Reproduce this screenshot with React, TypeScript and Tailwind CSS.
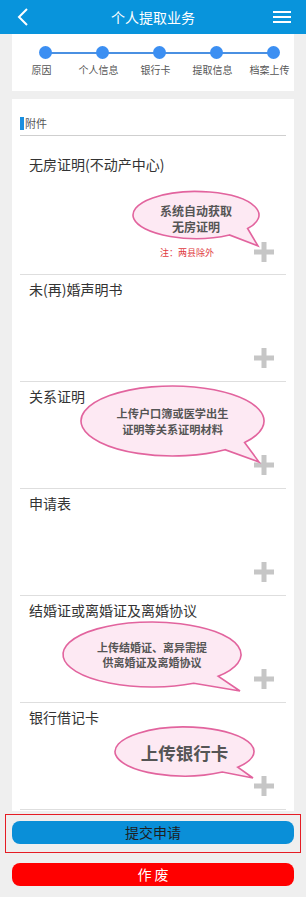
import React from "react";

const FONT = { fontFamily: '"Noto Sans CJK SC", "Noto Sans", sans-serif' };

function bubblePath(cx: number, cy: number, rx: number, ry: number, aDeg: number, bDeg: number, tx: number, ty: number) {
  const a = (aDeg * Math.PI) / 180;
  const b = (bDeg * Math.PI) / 180;
  const ax = cx + rx * Math.cos(a);
  const ay = cy + ry * Math.sin(a);
  const bx = cx + rx * Math.cos(b);
  const by = cy + ry * Math.sin(b);
  return `M${ax} ${ay} A${rx} ${ry} 0 1 0 ${bx} ${by} L${tx} ${ty} Z`;
}

const bubbles = [
  { cx: 196, cy: 215, rx: 63, ry: 23.5, a: 35, b: 58, tx: 258, ty: 246 },
  { cx: 172.5, cy: 421, rx: 91.5, ry: 35, a: 38, b: 55, tx: 259, ty: 462 },
  { cx: 152, cy: 654.5, rx: 89, ry: 32.5, a: 42, b: 62, tx: 240, ty: 691 },
  { cx: 184.5, cy: 751.5, rx: 69.5, ry: 24.5, a: 40, b: 57, tx: 253, ty: 778 },
];

function Plus() {
  return (
    <svg width="20" height="20" viewBox="0 0 20 20">
      <path d="M10 0.5V19.5M0.5 10H19.5" stroke="#c6c6c6" strokeWidth="5" strokeLinecap="round" />
    </svg>
  );
}

const steps = ["原因", "个人信息", "银行卡", "提取信息", "档案上传"];
const items = ["未(再)婚声明书", "关系证明", "申请表", "结婚证或离婚证及离婚协议", "银行借记卡"];

export default function App() {
  return (
    <div className="relative min-h-[897px] w-[306px] overflow-hidden bg-[#efefef]" style={FONT}>
      {/* Header */}
      <div className="relative flex h-[34px] items-center justify-center bg-[#0894dc]">
        <svg className="absolute left-[16px] top-[7px]" width="14" height="20" viewBox="0 0 14 20">
          <path d="M11 2L3 10L11 18" stroke="white" strokeWidth="2" fill="none" />
        </svg>
        <div className="text-[14px] leading-[20px] text-white">个人提取业务</div>
        <div className="absolute left-[273px] top-[11px] flex w-[18px] flex-col gap-[3.4px]">
          <div className="h-[1.8px] bg-white" />
          <div className="h-[1.8px] bg-white" />
          <div className="h-[1.8px] bg-white" />
        </div>
      </div>

      {/* Steps */}
      <div className="mx-3 h-[57px] bg-white pt-[12px]">
        <div className="relative ml-[4.5px] flex w-[285px]">
          <div className="absolute left-[28.5px] right-[28.5px] top-[5.5px] h-[2px] bg-[#4a90e2]" />
          {steps.map((s) => (
            <div key={s} className="flex w-[57px] justify-center">
              <div className="relative h-[13px] w-[13px] rounded-full bg-[#3c8ff2]" />
            </div>
          ))}
        </div>
        <div className="ml-[1px] mt-[4px] flex w-[285px]">
          {steps.map((s) => (
            <div key={s} className="w-[57px] text-center text-[10px] leading-[14px] text-[#555]">
              {s}
            </div>
          ))}
        </div>
      </div>

      {/* Attachments */}
      <div className="mx-3 mt-[8px] bg-white px-2 pb-[1px]">
        <div className="flex h-[37px] items-start border-b border-[#cfcfcf] pt-[18px]">
          <div className="h-[13px] w-[4px] bg-[#1a8fe0]" />
          <div className="ml-[1px] mt-[-1px] text-[11px] leading-[14px] text-[#555]">附件</div>
        </div>

        <div className="flex h-[139px] flex-col border-b border-[#dedede] pt-[18px] pb-[12px]">
          <div className="pl-[9px] text-[14px] leading-[20px] text-[#333]">无房证明(不动产中心)</div>
          <div className="flex-1" />
          <div className="flex items-end justify-end pr-[12px]">
            <div className="mb-[3px] mr-[40px] text-[9px] leading-[12px] text-[#e0393e]">注：两县除外</div>
            <Plus />
          </div>
        </div>

        {items.map((t) => (
          <div key={t} className="flex h-[107px] flex-col border-b border-[#dedede] pt-[4px] pb-[13px]">
            <div className="pl-[9px] text-[14px] leading-[20px] text-[#333]">{t}</div>
            <div className="flex-1" />
            <div className="flex justify-end pr-[12px]">
              <Plus />
            </div>
          </div>
        ))}
      </div>

      {/* Buttons */}
      <div className="mx-[5px] mt-[3px] h-[39px] border border-[#e51c24] px-[6px] pt-[6px]">
        <div className="flex h-[23px] items-center justify-center rounded-lg bg-[#0a8fd8] text-[14px] text-[#1e1e1e]">
          提交申请
        </div>
      </div>
      <div className="mx-3 mt-[10px] flex h-[23px] items-center justify-center rounded-lg bg-[#ff0000] text-[14px] text-white">
        作 废
      </div>

      {/* Speech bubbles overlay */}
      <svg className="pointer-events-none absolute left-0 top-0" width="306" height="897">
        {bubbles.map((b, i) => (
          <path
            key={i}
            d={bubblePath(b.cx, b.cy, b.rx, b.ry, b.a, b.b, b.tx, b.ty)}
            fill="#fde9f3"
            stroke="#e2649e"
            strokeWidth="1.6"
            strokeLinejoin="miter"
          />
        ))}
      </svg>
      <div className="absolute left-[133px] top-[203px] w-[126px] text-center text-[12px] font-bold leading-[16px] text-[#555]">
        系统自动获取
        <br />
        无房证明
      </div>
      <div className="absolute left-[81px] top-[405px] w-[183px] text-center text-[11.2px] font-bold leading-[16px] text-[#555]">
        上传户口簿或医学出生
        <br />
        证明等关系证明材料
      </div>
      <div className="absolute left-[63px] top-[640px] w-[178px] text-center text-[11px] font-bold leading-[15px] text-[#555]">
        上传结婚证、离异需提
        <br />
        供离婚证及离婚协议
      </div>
      <div className="absolute left-[115px] top-[741px] w-[139px] text-center text-[17.5px] font-bold leading-[24px] text-[#555]">
        上传银行卡
      </div>
    </div>
  );
}
